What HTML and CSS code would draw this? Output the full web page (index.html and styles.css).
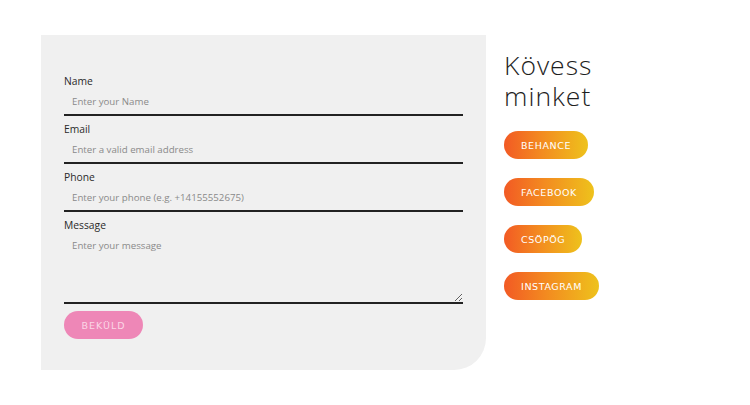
FILE: index.html
```html
<!DOCTYPE html>
<html>
<head>
<meta charset="utf-8">
<link rel="stylesheet" href="styles.css">
</head>
<body>
<div class="page">
  <form class="panel">
    <div class="field">
      <label class="label">Name</label>
      <input class="input" type="text" placeholder="Enter your Name">
    </div>
    <div class="field">
      <label class="label">Email</label>
      <input class="input" type="text" placeholder="Enter a valid email address">
    </div>
    <div class="field">
      <label class="label">Phone</label>
      <input class="input" type="text" placeholder="Enter your phone (e.g. +14155552675)">
    </div>
    <div class="field">
      <label class="label">Message</label>
      <textarea class="input textarea" placeholder="Enter your message"></textarea>
    </div>
    <button class="submit" type="button">BEKÜLD</button>
  </form>
  <div class="social">
    <h2 class="title"><span class="title-line">Kövess</span><span class="title-line">minket</span></h2>
    <div class="links">
      <a class="pill">BEHANCE</a>
      <a class="pill">FACEBOOK</a>
      <a class="pill">CSÖPÖG</a>
      <a class="pill">INSTAGRAM</a>
    </div>
  </div>
</div>
</body>
</html>
```
FILE: styles.css
```css
html, body {
  margin: 0;
  padding: 0;
  background: #fff;
}
.page {
  display: flex;
  align-items: flex-start;
  padding: 35px 0 0 41px;
}
.panel {
  box-sizing: border-box;
  width: 445px;
  height: 335px;
  background: #f0f0f0;
  border-bottom-right-radius: 32px;
  padding: 39px 23px 0 23px;
  display: flex;
  flex-direction: column;
  gap: 6px;
  font-family: "Open Sans", sans-serif;
}
.field {
  display: flex;
  flex-direction: column;
}
.label {
  font-size: 10.3px;
  line-height: 14px;
  color: #2a2a2a;
}
.input {
  box-sizing: border-box;
  height: 28px;
  border: none;
  border-bottom: 2px solid #222;
  background: transparent;
  padding: 0 8px;
  font-family: "Open Sans", sans-serif;
  font-size: 9.7px;
  color: #333;
  outline: none;
  margin: 0;
}
.input::placeholder {
  color: #8a8a8a;
}
.textarea {
  height: 72px;
  padding: 7px 8px;
  resize: vertical;
  line-height: 13px;
}
.submit {
  align-self: flex-start;
  margin-top: 1px;
  width: 79px;
  height: 28px;
  border: none;
  border-radius: 14px;
  background: #ee87b7;
  color: #fbd6e6;
  font-family: "DejaVu Sans", sans-serif;
  font-size: 9.5px;
  letter-spacing: 1px;
  padding: 0;
}
.social {
  margin-left: 18px;
  padding-top: 15px;
}
.title {
  margin: 0;
  font-family: "Open Sans", sans-serif;
  font-weight: 350;
  font-size: 26.5px;
  line-height: 31px;
  color: #1e1e1e;
  letter-spacing: 1px;
}
.title-line {
  display: block;
}
.links {
  margin-top: 19px;
  display: flex;
  flex-direction: column;
  align-items: flex-start;
  gap: 19px;
}
.pill {
  box-sizing: border-box;
  height: 28px;
  padding: 0 17px;
  border-radius: 14px;
  background: linear-gradient(90deg, #f25a24 0%, #f38b20 45%, #eec21c 100%);
  color: #fff;
  font-family: "DejaVu Sans", sans-serif;
  font-size: 9.5px;
  letter-spacing: 0.6px;
  display: flex;
  align-items: center;
}
```
